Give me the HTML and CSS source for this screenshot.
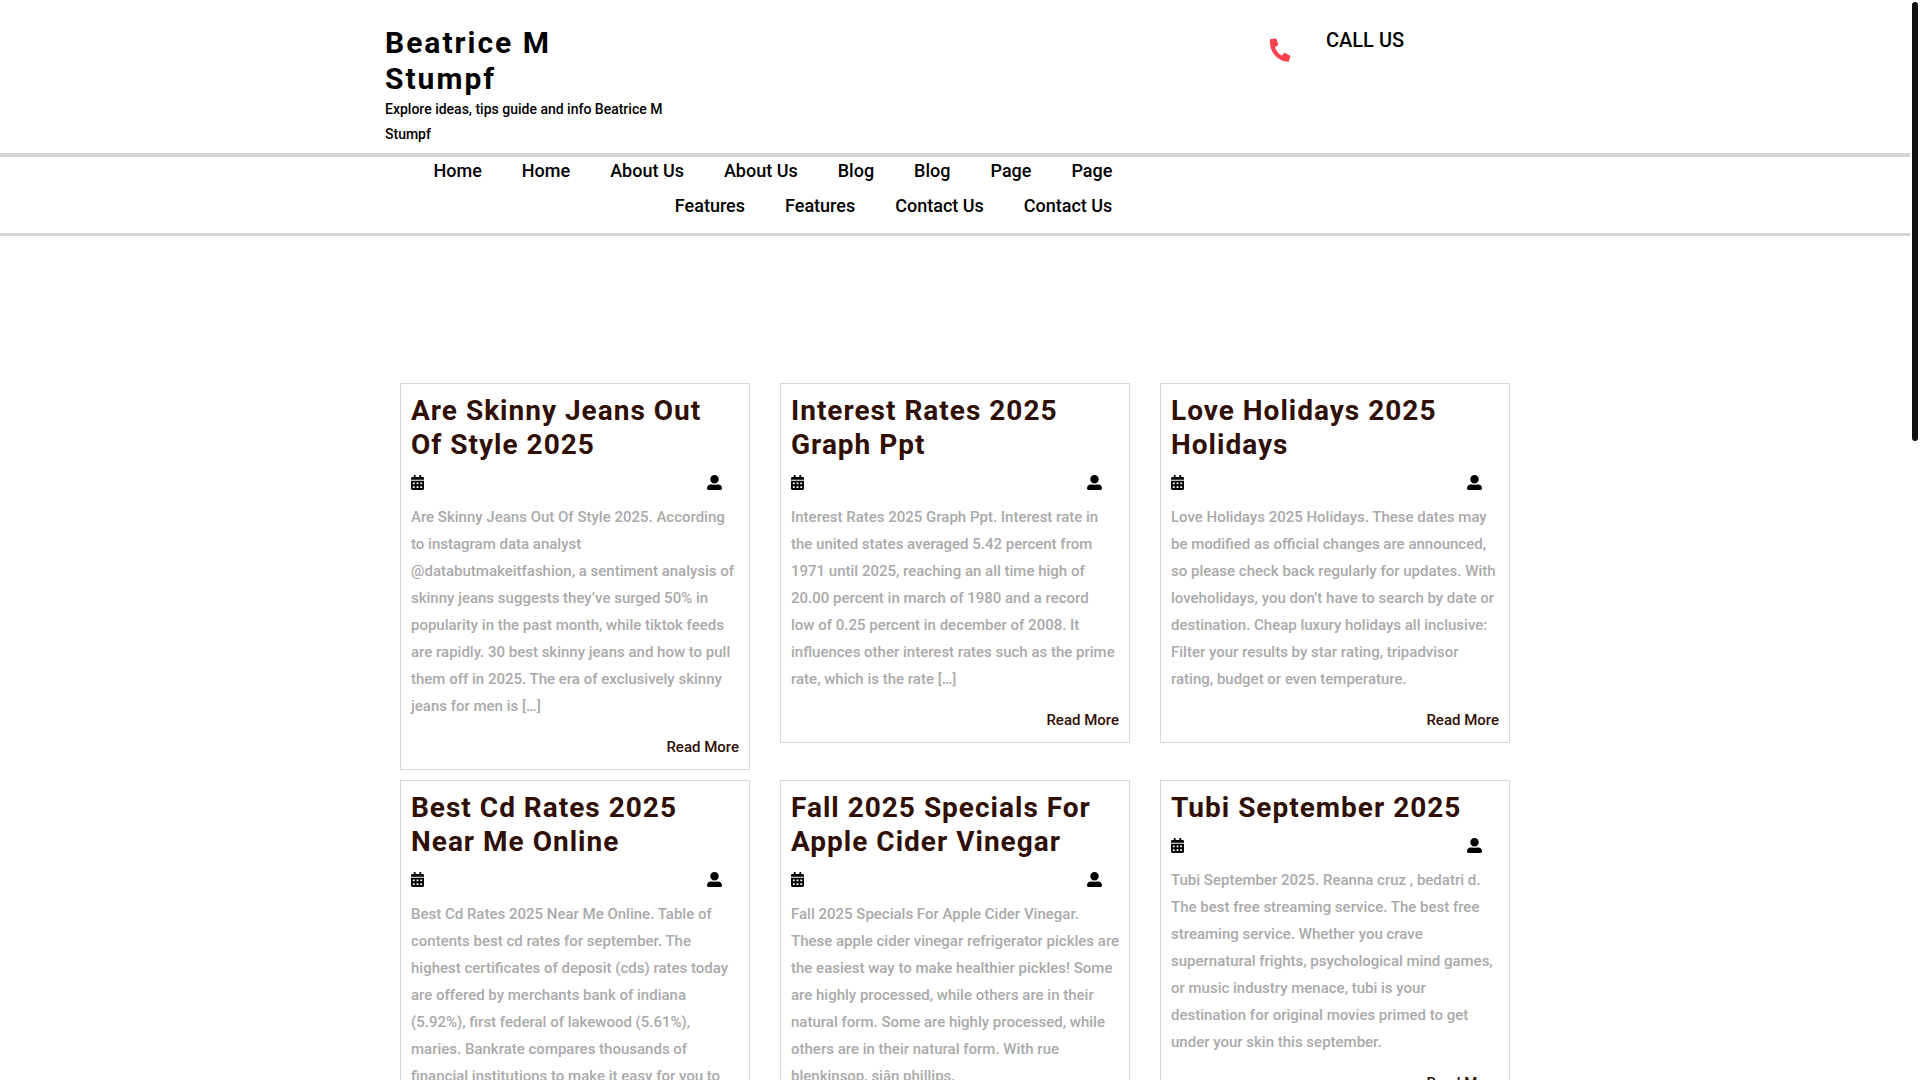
FILE: index.html
```html
<!DOCTYPE html>
<html lang="en">

<head>
    <meta charset="UTF-8">
    <meta name="viewport" content="width=device-width, initial-scale=1.0">
    <title>Beatrice M Stumpf</title>
    <link rel="stylesheet" href="styles.css">
</head>

<body>
    <!-- shared icons -->
    <svg class="sprite" aria-hidden="true">
        <symbol id="icon-phone" viewBox="0 0 512 512" overflow="visible">
            <path transform="rotate(96 256 256)" d="M493.4 24.6l-104-24c-11.3-2.6-22.9 3.3-27.5 13.9l-48 112c-4.2 9.8-1.4 21.3 6.9 28l60.6 49.6c-36 76.7-98.9 140.5-177.2 177.2l-49.6-60.6c-6.8-8.3-18.2-11.1-28-6.9l-112 48C3.9 366.5-2 378.1.6 389.4l24 104C27.1 504.2 36.7 512 48 512c256.1 0 464-207.5 464-464 0-11.2-7.7-20.9-18.6-23.4z"/>
        </symbol>
        <symbol id="icon-calendar" viewBox="0 0 448 512">
            <path d="M0 464c0 26.500 21.500 48 48 48h352c26.500 0 48-21.500 48-48V192H0v272zm320-196c0-6.600 5.400-12 12-12h40c6.600 0 12 5.400 12 12v40c0 6.600-5.400 12-12 12h-40c-6.600 0-12-5.400-12-12v-40zm0 128c0-6.600 5.400-12 12-12h40c6.600 0 12 5.400 12 12v40c0 6.600-5.400 12-12 12h-40c-6.600 0-12-5.400-12-12v-40zM192 268c0-6.600 5.400-12 12-12h40c6.600 0 12 5.400 12 12v40c0 6.600-5.400 12-12 12h-40c-6.600 0-12-5.400-12-12v-40zm0 128c0-6.600 5.400-12 12-12h40c6.600 0 12 5.400 12 12v40c0 6.600-5.400 12-12 12h-40c-6.600 0-12-5.400-12-12v-40zM64 268c0-6.600 5.400-12 12-12h40c6.600 0 12 5.400 12 12v40c0 6.600-5.400 12-12 12H76c-6.600 0-12-5.400-12-12v-40zm0 128c0-6.600 5.400-12 12-12h40c6.600 0 12 5.400 12 12v40c0 6.600-5.400 12-12 12H76c-6.600 0-12-5.400-12-12v-40zM400 64h-48V16c0-8.800-7.200-16-16-16h-32c-8.800 0-16 7.200-16 16v48H160V16c0-8.800-7.200-16-16-16h-32c-8.800 0-16 7.200-16 16v48H48C21.500 64 0 85.500 0 112v48h448v-48c0-26.500-21.500-48-48-48z"/>
        </symbol>
        <symbol id="icon-user" viewBox="0 0 512 512">
            <path d="M256 288c79.500 0 144-64.500 144-144S335.500 0 256 0 112 64.500 112 144s64.500 144 144 144zm128 32h-55.100c-22.200 10.200-46.900 16-72.900 16s-50.600-5.800-72.900-16H128C57.300 320 0 377.300 0 448v16c0 26.500 21.500 48 48 48h416c26.500 0 48-21.500 48-48v-16c0-70.700-57.300-128-128-128z"/>
        </symbol>
    </svg>

    <header>
        <div class="container top-header">
            <div class="logo">
                <h1><a href="#">Beatrice M Stumpf</a></h1>
                <p>Explore ideas, tips guide and info Beatrice M Stumpf</p>
            </div>
            <div class="call">
                <svg class="phone"><use href="#icon-phone"/></svg>
                <p>CALL US</p>
            </div>
        </div>
        <div class="menu-section">
            <div class="container">
                <nav>
                    <ul class="menu">
                        <li><a href="#">Home</a></li>
                        <li><a href="#">Home</a></li>
                        <li><a href="#">About Us</a></li>
                        <li><a href="#">About Us</a></li>
                        <li><a href="#">Blog</a></li>
                        <li><a href="#">Blog</a></li>
                        <li><a href="#">Page</a></li>
                        <li><a href="#">Page</a></li>
                        <li><a href="#">Features</a></li>
                        <li><a href="#">Features</a></li>
                        <li><a href="#">Contact Us</a></li>
                        <li><a href="#">Contact Us</a></li>
                    </ul>
                </nav>
            </div>
        </div>
    </header>

    <main class="container posts">
        <article class="post">
            <h2><a href="#">Are Skinny Jeans Out Of Style 2025</a></h2>
            <div class="meta">
                <svg class="calendar"><use href="#icon-calendar"/></svg>
                <svg class="user"><use href="#icon-user"/></svg>
            </div>
            <p>Are Skinny Jeans Out Of Style 2025. According to instagram data analyst @databutmakeitfashion, a sentiment analysis of skinny jeans suggests they’ve surged 50% in popularity in the past month, while tiktok feeds are rapidly. 30 best skinny jeans and how to pull them off in 2025. The era of exclusively skinny jeans for men is […]</p>
            <a class="read-more" href="#">Read More</a>
        </article>

        <article class="post">
            <h2><a href="#">Interest Rates 2025 Graph Ppt</a></h2>
            <div class="meta">
                <svg class="calendar"><use href="#icon-calendar"/></svg>
                <svg class="user"><use href="#icon-user"/></svg>
            </div>
            <p>Interest Rates 2025 Graph Ppt. Interest rate in the united states averaged 5.42 percent from 1971 until 2025, reaching an all time high of 20.00 percent in march of 1980 and a record<br> low of 0.25 percent in december of 2008. It influences other interest rates such as the prime rate, which is the rate […]</p>
            <a class="read-more" href="#">Read More</a>
        </article>

        <article class="post">
            <h2><a href="#">Love Holidays 2025 Holidays</a></h2>
            <div class="meta">
                <svg class="calendar"><use href="#icon-calendar"/></svg>
                <svg class="user"><use href="#icon-user"/></svg>
            </div>
            <p>Love Holidays 2025 Holidays. These dates may be modified as official changes are announced, so please check back regularly for updates. With loveholidays, you don’t have to search by date or destination. Cheap luxury holidays all inclusive: Filter your results by star rating, tripadvisor rating, budget or even temperature.</p>
            <a class="read-more" href="#">Read More</a>
        </article>

        <article class="post">
            <h2><a href="#">Best Cd Rates 2025 Near Me Online</a></h2>
            <div class="meta">
                <svg class="calendar"><use href="#icon-calendar"/></svg>
                <svg class="user"><use href="#icon-user"/></svg>
            </div>
            <p>Best Cd Rates 2025 Near Me Online. Table of contents best cd rates for september. The highest certificates of deposit (cds) rates today are offered by merchants bank of indiana (5.92%), first federal of lakewood (5.61%), maries. Bankrate compares thousands of financial institutions to make it easy for you to […]</p>
            <a class="read-more" href="#">Read More</a>
        </article>

        <article class="post">
            <h2><a href="#">Fall 2025 Specials For Apple Cider Vinegar</a></h2>
            <div class="meta">
                <svg class="calendar"><use href="#icon-calendar"/></svg>
                <svg class="user"><use href="#icon-user"/></svg>
            </div>
            <p>Fall 2025 Specials For Apple Cider Vinegar. These apple cider vinegar refrigerator pickles are the easiest way to make healthier pickles! Some are highly processed, while others are in their natural form. Some are highly processed, while others are in their natural form. With rue blenkinsop, siân phillips.</p>
            <a class="read-more" href="#">Read More</a>
        </article>

        <article class="post">
            <h2><a href="#">Tubi September 2025</a></h2>
            <div class="meta">
                <svg class="calendar"><use href="#icon-calendar"/></svg>
                <svg class="user"><use href="#icon-user"/></svg>
            </div>
            <p>Tubi September 2025. Reanna cruz , bedatri d. The best free streaming service. The best free streaming service. Whether you crave supernatural frights, psychological mind games, or music industry menace, tubi is your destination for original movies primed to get under your skin this september.</p>
            <a class="read-more" href="#">Read More</a>
        </article>
    </main>

    <div class="scroll-thumb"></div>
</body>

</html>
```

FILE: styles.css
```css
* {
    box-sizing: border-box;
}

html {
    scrollbar-width: none;
}

body {
    margin: 0;
    padding-right: 10px;
    background: #fff;
    color: #000;
    font-family: Roboto, "Liberation Sans", sans-serif;
    font-size: 15px;
    font-weight: 500;
    line-height: 27px;
}

h1,
h2,
p,
ul {
    margin: 0;
    padding: 0;
}

a {
    color: inherit;
    text-decoration: none;
}

svg {
    display: block;
    fill: currentColor;
}

.sprite {
    display: none;
}

.container {
    max-width: 1140px;
    margin: 0 auto;
}

/* header */
.top-header {
    display: flex;
    justify-content: space-between;
    padding: 25px 0 6px;
}

.logo {
    width: 25%;
}

.logo h1 {
    font-size: 30px;
    font-weight: 700;
    letter-spacing: 2px;
    line-height: 36px;
}

.logo p {
    font-size: 14px;
    line-height: 25px;
}

.call {
    display: flex;
    gap: 35px;
    width: 25%;
    padding-left: 29px;
}

.call p {
    font-size: 20px;
    line-height: 30px;
}

.phone {
    width: 22px;
    height: 22px;
    margin-top: 14px;
    overflow: visible;
    color: #ff404d;
}

/* menu */
.menu-section {
    border-top: 4px solid #d5d5d5;
    border-bottom: 3px solid #d5d5d5;
}

nav {
    width: 66%;
    padding: 0 25px 13px 0;
}

.menu {
    display: flex;
    flex-wrap: wrap;
    justify-content: flex-end;
    gap: 7px 40px;
    list-style: none;
    font-size: 18px;
    line-height: 28px;
}

/* posts */
.posts {
    display: grid;
    grid-template-columns: repeat(3, 1fr);
    align-items: start;
    gap: 10px 30px;
    margin-top: 147px;
    padding: 0 15px;
}

.post {
    padding: 10px 10px 8px;
    border: 1px solid #ddd6d8;
}

.post h2 {
    color: #2f0f06;
    font-size: 28px;
    font-weight: 700;
    letter-spacing: 1px;
    line-height: 34px;
}

.post p {
    margin-right: -1px;
    color: #aaa;
}

.meta {
    display: flex;
    justify-content: space-between;
    padding: 13px 17px 14px 0;
}

.calendar {
    width: 13px;
    height: 15px;
}

.user {
    width: 15px;
    height: 15px;
}

.read-more {
    display: block;
    margin-top: 14px;
    color: #2f0f06;
    text-align: right;
}

/* scroll thumb floating over the page edge */
.scroll-thumb {
    position: fixed;
    top: 2px;
    right: 2px;
    width: 6px;
    height: 439px;
    border-radius: 5px;
    background: #111;
}
```
